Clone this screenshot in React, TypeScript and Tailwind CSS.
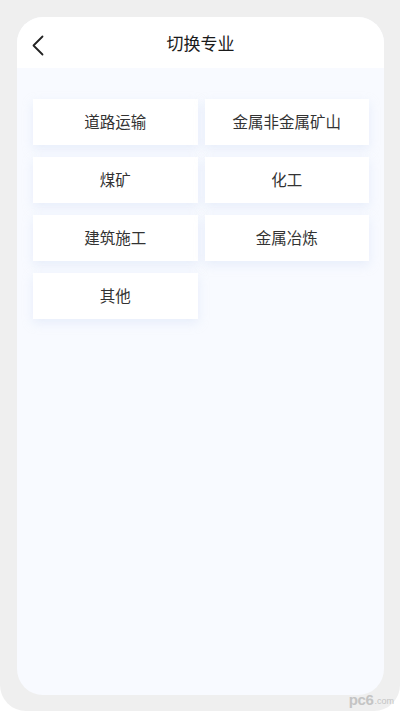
import React from "react";

const items = ["道路运输", "金属非金属矿山", "煤矿", "化工", "建筑施工", "金属冶炼", "其他"];

export default function App() {
  return (
    <div
      className="w-[400px] h-[711px] bg-white"
      style={{ fontFamily: '"Noto Sans CJK SC", "Noto Sans", sans-serif' }}
    >
      <div className="w-full h-full bg-[#efefef] rounded-b-[26px] pt-[17px] pb-[16px] px-[17px] relative">
        <div className="w-[367px] h-full rounded-[26px] bg-[#f8faff] overflow-hidden flex flex-col">
          <div className="h-[51px] bg-white flex items-center relative">
            <svg className="absolute left-[14px] top-[18px]" width="14" height="22" viewBox="0 0 14 22" fill="none">
              <path d="M11.5 1.5 L2.5 10.5 L11.5 19.5" stroke="#222" strokeWidth="1.8" strokeLinecap="round" strokeLinejoin="round" />
            </svg>
            <div className="w-full text-center text-[17px] text-[#1a1a1a] leading-none">切换专业</div>
          </div>
          <div className="grid grid-cols-2 gap-x-[7px] gap-y-[12px] pl-[16px] pr-[15px] pt-[31px]">
            {items.map((t) => (
              <div
                key={t}
                className="h-[46px] bg-white flex items-center justify-center text-[15.5px] text-[#333] shadow-[0_4px_10px_rgba(200,215,240,0.35)]"
              >
                {t}
              </div>
            ))}
          </div>
        </div>
        <div className="absolute right-[6px] bottom-[4px] flex items-end leading-none text-[#c4c4c4]" style={{ fontFamily: '"Liberation Sans", sans-serif' }}>
          <span className="text-[15px] font-bold tracking-tight">pc6</span>
          <span className="text-[9px] ml-[1px] mb-[1px]">.com</span>
        </div>
      </div>
    </div>
  );
}
